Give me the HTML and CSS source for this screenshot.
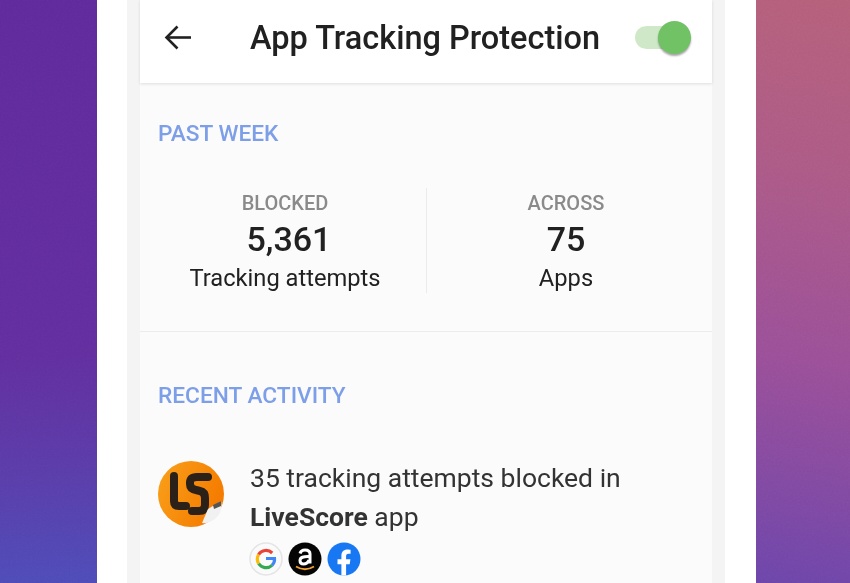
FILE: index.html
```html
<!DOCTYPE html>
<html lang="en">
<head>
    <meta charset="UTF-8">
    <meta name="viewport" content="width=device-width, initial-scale=1.0">
    <title>App Tracking Protection</title>
    <link rel="stylesheet" href="styles.css">
</head>
<body>
    <div class="wrapper">
        <div class="side side-left">
            <svg class="grain" width="97" height="583">
                <filter id="grain-left">
                    <feTurbulence type="fractalNoise" baseFrequency="0.55" numOctaves="2" seed="3"/>
                    <feColorMatrix type="saturate" values="0"/>
                </filter>
                <rect width="97" height="583" filter="url(#grain-left)"/>
            </svg>
        </div>
        <div class="frame">
            <div class="phone">
                <div class="app">
                    <div class="topbar">
                        <svg class="back" width="28" height="28" viewBox="0 0 28 28" fill="none" stroke="#212121" stroke-width="2.6">
                            <path d="M27 13.5H3"/>
                            <path d="M13.5 2.5L2.5 13.5L13.5 24.5"/>
                        </svg>
                        <div class="title">App Tracking Protection</div>
                        <div class="toggle">
                            <div class="track"></div>
                            <div class="knob"></div>
                        </div>
                    </div>

                    <div class="week">
                        <div class="heading">PAST WEEK</div>
                        <div class="stats">
                            <div class="stat">
                                <div class="stat-label">BLOCKED</div>
                                <div class="stat-num">5,361</div>
                                <div class="stat-text">Tracking attempts</div>
                            </div>
                            <div class="stat stat-right">
                                <div class="stat-label">ACROSS</div>
                                <div class="stat-num">75</div>
                                <div class="stat-text">Apps</div>
                            </div>
                        </div>
                    </div>

                    <div class="recent">
                        <div class="heading">RECENT ACTIVITY</div>
                        <div class="item">
                            <svg class="app-logo" width="66" height="66" viewBox="0 0 66 66">
                                <defs>
                                    <linearGradient id="ls" x1="0" y1="0" x2="1" y2="0.4">
                                        <stop offset="0" stop-color="#f9a11b"/>
                                        <stop offset="1" stop-color="#f57c00"/>
                                    </linearGradient>
                                </defs>
                                <circle cx="33" cy="33" r="33" fill="url(#ls)"/>
                                <path d="M16 15V40Q16 45 21 45H28" fill="none" stroke="#2b2118" stroke-width="8" stroke-linecap="round"/>
                                <path d="M50 16H39Q32 16 32 22V23Q32 28 38 29L42 30Q47 31 47 37V44Q47 50 41 50H34" fill="none" stroke="#2b2118" stroke-width="8" stroke-linecap="round"/>
                                <path d="M44 62L50 48L63 40Q65 50 59 56Q52 63 44 62Z" fill="#f1f1f1"/>
                                <path d="M55 44L63 40L63 45L56 48Z" fill="#555"/>
                            </svg>
                            <div class="item-body">
                                <div class="item-text">35 tracking attempts blocked in</div>
                                <div class="item-text"><b>LiveScore</b> app</div>
                                <div class="trackers">
                                    <svg class="tracker" width="34" height="34" viewBox="0 0 34 34">
                                        <circle cx="17" cy="17" r="16" fill="#fafafa" stroke="#e4e4e4" stroke-width="1.5"/>
                                        <path d="M17 16.5H25.5A8.8 8.8 0 0 1 23 23.4" fill="none" stroke="#4285f4" stroke-width="3.2"/>
                                        <path d="M23 23.4A8.8 8.8 0 0 1 9.6 21.5" fill="none" stroke="#34a853" stroke-width="3.2"/>
                                        <path d="M9.6 21.5A8.8 8.8 0 0 1 9.6 12.5" fill="none" stroke="#fbbc05" stroke-width="3.2"/>
                                        <path d="M9.6 12.5A8.8 8.8 0 0 1 23.2 11" fill="none" stroke="#ea4335" stroke-width="3.2"/>
                                    </svg>
                                    <svg class="tracker" width="34" height="34" viewBox="0 0 34 34">
                                        <circle cx="17" cy="17" r="16.5" fill="#050505"/>
                                        <path d="M12 11.5Q13 8 17 8Q22 8 22 12V21.5" fill="none" stroke="#fff" stroke-width="3"/>
                                        <path d="M22 14.5Q12 14 12 18.5Q12 22 15.5 22Q19.5 22 21 18" fill="none" stroke="#fff" stroke-width="3"/>
                                        <path d="M8 24.5Q17 30 26 24.5" fill="none" stroke="#f0a030" stroke-width="1.8"/>
                                    </svg>
                                    <svg class="tracker" width="34" height="34" viewBox="0 0 34 34">
                                        <circle cx="17" cy="17" r="16.5" fill="#1877f2"/>
                                        <path d="M14.4 33.4V22.2H10.5V17.2H14.4V13.6C14.4 9.6 16.8 7.4 20.4 7.4C22.1 7.4 23.6 7.7 23.6 7.7V11.8H21.5C19.6 11.8 19.1 13 19.1 14.2V17.2H23.4L22.7 22.2H19.1V33.4Z" fill="#fff"/>
                                    </svg>
                                </div>
                            </div>
                        </div>
                    </div>
                </div>
            </div>
        </div>
        <div class="side side-right">
            <svg class="grain" width="94" height="583">
                <filter id="grain-right">
                    <feTurbulence type="fractalNoise" baseFrequency="0.55" numOctaves="2" seed="8"/>
                    <feColorMatrix type="saturate" values="0"/>
                </filter>
                <rect width="94" height="583" filter="url(#grain-right)"/>
            </svg>
        </div>
    </div>
</body>
</html>
```

FILE: styles.css
```css
*{
    box-sizing: border-box;
}

html, body{
    margin: 0;
    padding: 0;
    overflow: hidden;
}

body{
    font-family: Roboto, "Liberation Sans", sans-serif;
    background-color: #ffffff;
}

.wrapper{
    display: flex;
    width: 850px;
    height: 583px;
}

.side{
    position: relative;
    height: 100%;
    overflow: hidden;
}

.side-left{
    width: 97px;
    background: linear-gradient(178deg, #5f2a9c 0%, #622e9e 60%, #5a3ca8 80%, #4e4cb8 100%);
}

.side-right{
    width: 94px;
    background: linear-gradient(190deg, #b5607a 0%, #ac5a86 30%, #9a4f98 62%, #6c45aa 100%);
}

.grain{
    position: absolute;
    left: 0;
    top: 0;
    opacity: 0.1;
    mix-blend-mode: overlay;
}

.frame{
    width: 659px;
    padding: 0 31px 0 30px;
}

.phone{
    height: 100%;
    padding: 0 13px;
    background-color: #f4f4f4;
}

.app{
    height: 100%;
    background-color: #fbfbfb;
    filter: blur(0.35px);
}

.topbar{
    display: flex;
    align-items: center;
    height: 83px;
    padding: 0 20px 8px 24px;
    background-color: #ffffff;
    box-shadow: 0 1px 3px rgba(0, 0, 0, 0.12);
}

.back{
    flex: none;
}

.title{
    margin-left: 58px;
    font-size: 32.5px;
    font-weight: 500;
    color: #212121;
    white-space: nowrap;
}

.toggle{
    position: relative;
    margin-left: auto;
    width: 57px;
    height: 34px;
}

.track{
    position: absolute;
    left: 0;
    top: 5px;
    width: 48px;
    height: 23px;
    border-radius: 12px;
    background-color: #cfe9c8;
}

.knob{
    position: absolute;
    right: 1px;
    top: 0;
    width: 33px;
    height: 33px;
    border-radius: 50%;
    background-color: #71c264;
    box-shadow: 0 2px 2px rgba(0, 0, 0, 0.35);
}

.heading{
    font-size: 22.7px;
    font-weight: 500;
    line-height: 26px;
    color: #7d9fe8;
}

.week{
    height: 249px;
    padding: 38px 0 0 18px;
    border-bottom: 1px solid #ececec;
}

.stats{
    display: flex;
    margin-top: 41px;
    margin-left: -18px;
}

.stat{
    width: 287px;
    height: 105px;
    padding-left: 4px;
    text-align: center;
    border-right: 1px solid #ebebeb;
}

.stat-right{
    width: 281px;
    padding-left: 0;
    padding-right: 3px;
    border-right: none;
}

.stat-label{
    margin-top: 4px;
    font-size: 20px;
    font-weight: 500;
    line-height: 22px;
    color: #8a8a8a;
}

.stat-num{
    margin-top: 5px;
    font-size: 34px;
    font-weight: 500;
    line-height: 40px;
    color: #212121;
}

.stat:first-child .stat-num{
    padding-left: 8px;
}

.stat-text{
    margin-top: 5px;
    font-size: 23.7px;
    line-height: 28px;
    color: #212121;
}

.recent{
    padding: 51px 0 0 18px;
}

.item{
    display: flex;
    margin-top: 49px;
}

.app-logo{
    flex: none;
    margin-top: 3px;
}

.item-body{
    margin-left: 26px;
}

.item-text{
    font-size: 26.5px;
    line-height: 39px;
    color: #333333;
    white-space: nowrap;
}

.item-text b{
    font-weight: 700;
}

.trackers{
    display: flex;
    gap: 5px;
    margin-top: 6px;
    margin-left: -1px;
}
```
